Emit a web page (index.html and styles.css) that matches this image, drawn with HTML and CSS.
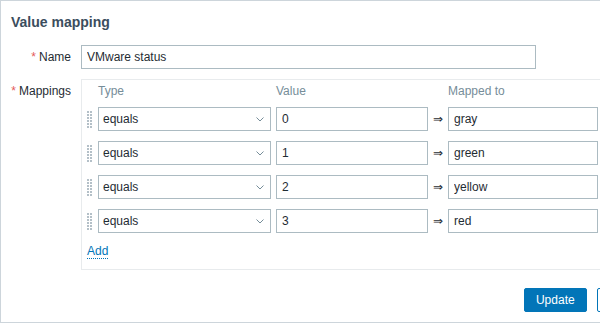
FILE: index.html
```html
<!DOCTYPE html>
<html lang="en">
<head>
  <meta charset="UTF-8" />
  <title>Value mapping</title>
  <link rel="stylesheet" href="styles.css">
</head>
<body>
  <div class="dialog">
    <div class="dialog-header">
      <h4>Value mapping</h4>
    </div>

    <form class="form-grid">
      <label class="form-label required" for="vm-name">Name</label>
      <div class="form-field">
        <input class="text-input name-input" id="vm-name" type="text" value="VMware status">
      </div>

      <label class="form-label required">Mappings</label>
      <div class="form-field">
        <div class="mappings">
          <div class="mappings-grid">
            <div></div>
            <div class="col-head">Type</div>
            <div class="col-head">Value</div>
            <div></div>
            <div class="col-head">Mapped to</div>

            <!-- row 1 -->
            <div class="drag-handle"><svg width="5" height="17"><use href="#dots"/></svg></div>
            <div class="select-box"><span>equals</span><svg class="chevron" width="8" height="5" viewBox="0 0 8 5"><path d="M0.5 0.5 L4 4 L7.5 0.5" /></svg></div>
            <input class="text-input" type="text" value="0">
            <div class="arrow">&rArr;</div>
            <input class="text-input" type="text" value="gray">

            <!-- row 2 -->
            <div class="drag-handle"><svg width="5" height="17"><use href="#dots"/></svg></div>
            <div class="select-box"><span>equals</span><svg class="chevron" width="8" height="5" viewBox="0 0 8 5"><path d="M0.5 0.5 L4 4 L7.5 0.5" /></svg></div>
            <input class="text-input" type="text" value="1">
            <div class="arrow">&rArr;</div>
            <input class="text-input" type="text" value="green">

            <!-- row 3 -->
            <div class="drag-handle"><svg width="5" height="17"><use href="#dots"/></svg></div>
            <div class="select-box"><span>equals</span><svg class="chevron" width="8" height="5" viewBox="0 0 8 5"><path d="M0.5 0.5 L4 4 L7.5 0.5" /></svg></div>
            <input class="text-input" type="text" value="2">
            <div class="arrow">&rArr;</div>
            <input class="text-input" type="text" value="yellow">

            <!-- row 4 -->
            <div class="drag-handle"><svg width="5" height="17"><use href="#dots"/></svg></div>
            <div class="select-box"><span>equals</span><svg class="chevron" width="8" height="5" viewBox="0 0 8 5"><path d="M0.5 0.5 L4 4 L7.5 0.5" /></svg></div>
            <input class="text-input" type="text" value="3">
            <div class="arrow">&rArr;</div>
            <input class="text-input" type="text" value="red">
          </div>

          <div class="add-row">
            <a class="link-action" href="#">Add</a>
          </div>
        </div>
      </div>
    </form>

    <div class="dialog-footer">
      <button class="btn" type="button">Update</button>
      <button class="btn btn-alt" type="button">Cancel</button>
    </div>
  </div>

  <!-- drag handle dots -->
  <svg width="0" height="0" class="defs">
    <defs>
      <g id="dots" fill="#b4c0c8">
        <rect x="0" y="0" width="2" height="2"/><rect x="3" y="0" width="2" height="2"/>
        <rect x="0" y="3" width="2" height="2"/><rect x="3" y="3" width="2" height="2"/>
        <rect x="0" y="6" width="2" height="2"/><rect x="3" y="6" width="2" height="2"/>
        <rect x="0" y="9" width="2" height="2"/><rect x="3" y="9" width="2" height="2"/>
        <rect x="0" y="12" width="2" height="2"/><rect x="3" y="12" width="2" height="2"/>
        <rect x="0" y="15" width="2" height="2"/><rect x="3" y="15" width="2" height="2"/>
      </g>
    </defs>
  </svg>
</body>
</html>
```

FILE: styles.css
```css
* {
  box-sizing: border-box;
}
body {
  margin: 0;
  overflow: hidden;
  background: #ffffff;
  font-family: "Liberation Sans", Arial, sans-serif;
  font-size: 12px;
  color: #1f2c33;
}

/* Dialog frame */
.dialog {
  width: 669px;
  height: 323px;
  border: 1px solid #cdd5db;
  background: #ffffff;
  display: flex;
  flex-direction: column;
}

.dialog-header {
  padding: 12px 10px 14px;
}
.dialog-header h4 {
  margin: 0;
  font-size: 14px;
  line-height: 18px;
  font-weight: bold;
  color: #3b4d5d;
}

/* Form layout */
.form-grid {
  display: grid;
  grid-template-columns: 60px 1fr;
  column-gap: 10px;
  row-gap: 10px;
  padding: 0 10px;
  margin: 0;
}
.form-label {
  text-align: right;
  line-height: 24px;
  white-space: nowrap;
}
.form-label.required::before {
  content: "*";
  color: #e45959;
  margin-right: 3px;
}

/* Inputs */
.text-input {
  height: 24px;
  border: 1px solid #acbbc2;
  border-radius: 0;
  padding: 0 5px;
  font-family: inherit;
  font-size: 12px;
  color: #1f2c33;
  background: #ffffff;
  outline: none;
  margin: 0;
  width: 100%;
}
.name-input {
  width: 455px;
}

.select-box {
  height: 24px;
  border: 1px solid #acbbc2;
  padding: 0 6px 0 4px;
  display: flex;
  align-items: center;
  justify-content: space-between;
  background: #ffffff;
}
.chevron path {
  fill: none;
  stroke: #768d99;
  stroke-width: 1;
}

/* Mappings table */
.mappings {
  border: 1px solid #e8ebed;
  padding: 5px 5px 10px;
}
.mappings-grid {
  display: grid;
  grid-template-columns: 6px 173px 152px 10px 150px;
  grid-template-rows: 12px;
  grid-auto-rows: 24px;
  column-gap: 5px;
  row-gap: 10px;
  align-items: center;
}
.col-head {
  color: #768d99;
  line-height: 12px;
  align-self: start;
}
.col-head:first-of-type {
  padding-left: 1px;
}
.drag-handle {
  display: flex;
  align-items: center;
  height: 24px;
}
.arrow {
  text-align: center;
  color: #1f2c33;
  font-size: 12px;
}
.defs {
  position: absolute;
}

.add-row {
  margin-top: 10px;
  line-height: 16px;
}
.link-action {
  color: #0275b8;
  text-decoration: none;
  border-bottom: 1px dotted #0275b8;
}

/* Footer buttons */
.dialog-footer {
  margin-top: auto;
  padding: 0 10px 10px;
  display: flex;
  justify-content: flex-end;
  gap: 10px;
}
.btn {
  height: 24px;
  padding: 0 11px;
  font-family: inherit;
  font-size: 12px;
  color: #ffffff;
  background: #0275b8;
  border: 1px solid #0275b8;
  border-radius: 2px;
  cursor: pointer;
}
.btn-alt {
  color: #0275b8;
  background: #ffffff;
}
```
